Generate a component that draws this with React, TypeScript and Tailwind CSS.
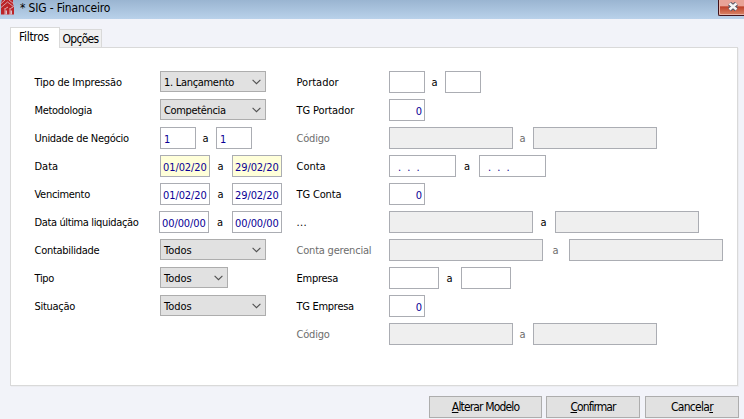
import type { ReactNode } from 'react';

type FieldSpec = { w: string; value?: string; tone?: 'plain' | 'yellow' | 'off'; align?: string };

function Label({ children, muted, track = '' }: { children: ReactNode; muted?: boolean; track?: string }) {
  return <span className={`mt-px h-[21px] leading-[21px] ${track} ${muted ? 'text-[#6d6d6d]' : 'text-black'}`}>{children}</span>;
}

function Field({ w, value, tone = 'plain', align = 'pl-[3px]' }: FieldSpec) {
  const tones = { plain: 'bg-white', yellow: 'bg-[#ffffd9]', off: 'bg-[#efefef]' };
  return (
    <div className={`h-[22px] shrink-0 overflow-hidden whitespace-pre border border-[#abadb3] pt-px leading-[21px] text-[#0a0096] ${w} ${tones[tone]} ${align}`}>
      {value}
    </div>
  );
}

function Combo({ w, value, track = '' }: { w: string; value: string; track?: string }) {
  return (
    <div className={`flex h-[21px] shrink-0 items-center justify-between border border-[#adadad] bg-[#e1e1e1] pr-1 pl-[3px] text-black ${w} ${track}`}>
      <span className="pt-[2px] leading-[19px]">{value}</span>
      <svg width="9" height="6" viewBox="0 0 9 6" fill="none" stroke="#505050" strokeWidth="1.1">
        <path d="M.6 .8 4.5 4.7 8.4 .8" />
      </svg>
    </div>
  );
}

function Row({ label, labelW, muted, track, children }: { label: string; labelW: string; muted?: boolean; track?: string; children: ReactNode }) {
  return (
    <div className="flex h-7 items-start whitespace-nowrap">
      <div className={`flex shrink-0 pl-[0.5px] ${labelW}`}>
        <Label muted={muted} track={track}>{label}</Label>
      </div>
      {children}
    </div>
  );
}

function To({ w, muted }: { w: string; muted?: boolean }) {
  return (
    <div className={`flex shrink-0 justify-center pr-px ${w}`}>
      <Label muted={muted}>a</Label>
    </div>
  );
}

const dateAlign = 'pl-[2px] tracking-[-0.1px]';

function Logo() {
  return (
    <svg width="16" height="16" viewBox="0 0 16 16" className="block">
      <path d="M2 0h11v4l1 3v7.500H1V3z" fill="#bb2428" />
      <path d="M0 4.500 5 0M1 7.500 7.500 2l6.500 5M9 0l5 4" stroke="#d9aab3" strokeWidth=".9" fill="none" />
      <path d="M5 8v7M5.500 8.500 8 7M10 8v7M10.500 8.500 13 7" stroke="#e3bfc5" strokeWidth=".9" fill="none" />
      <path d="M5.500 10.500H7v4H5.500zM10.500 10.500H12v4h-1.500z" fill="#dcc0cb" />
    </svg>
  );
}

function Action({ w, track, children }: { w: string; track: string; children: ReactNode }) {
  return (
    <button className={`h-[22px] border border-[#adadad] bg-[#e1e1e1] text-[12px] leading-[20px] text-black ${w} ${track}`}>
      {children}
    </button>
  );
}

export default function App() {
  return (
    <div className="h-[419px] w-[744px] overflow-hidden bg-[#f2f3f9] font-['DejaVu_Sans_Condensed','DejaVu_Sans',sans-serif] text-[11px] [font-stretch:condensed]">
      <header className="flex h-[19px] items-start justify-between bg-linear-to-b from-[#9ab5d1] to-[#b9d1ea]">
        <div className="flex">
          <Logo />
          <h1 className="ml-[4px] text-[12px] leading-[16px] tracking-[-0.15px] whitespace-nowrap text-black">* SIG - Financeiro</h1>
        </div>
        <div className="flex h-4 w-[26px] items-start justify-center rounded-bl-[2px] border-b border-l border-[#42121a] bg-linear-to-b from-[#e8a397] from-40% via-[#bd4029] via-45% to-[#d98568] pl-1 shadow-[inset_1px_-1px_0_#e8b5a9]">
          <svg width="13" height="12" viewBox="0 0 13 12" className="mt-0.5">
            <path d="M2.500 1.500 9.500 7.500M9.500 1.500 2.500 7.500" stroke="#535666" strokeWidth="4.500" />
            <path d="M2.500 1.500 9.500 7.500M9.500 1.500 2.500 7.500" stroke="#f5f5f5" strokeWidth="2.500" />
          </svg>
        </div>
      </header>

      <nav className="ml-[10px] flex h-7 items-end pt-2">
        <div className="relative z-10 -mb-px h-[21px] w-[50px] shrink-0 border border-b-0 border-[#d9d9d9] bg-white pl-2 text-[12px] leading-[18px] tracking-[-0.3px]">Filtros</div>
        <div className="h-[18px] w-[42px] shrink-0 border border-b-0 border-l-0 border-[#d9d9d9] bg-[#f0f0f0] pl-[2.5px] text-[12px] leading-[19px] tracking-[-0.7px]">Opções</div>
      </nav>

      <main className="ml-[10px] flex h-[339px] w-[728px] border border-[#d9d9d9] bg-white pt-[23px] pl-[23px] shadow-[1px_1px_0_#ecedf1]">
        <section className="w-[262px] shrink-0">
          <Row label="Tipo de Impressão" labelW="w-[126px]" track="tracking-[-0.2px]"><Combo w="w-[106px]" value="1. Lançamento" track="tracking-[-0.3px]" /></Row>
          <Row label="Metodologia" labelW="w-[126px]" track="tracking-[-0.3px]"><Combo w="w-[106px]" value="Competência" track="tracking-[-0.35px]" /></Row>
          <Row label="Unidade de Negócio" labelW="w-[126px]" track="tracking-[-0.3px]">
            <Field w="w-[36px]" value="1" /><To w="w-5" /><Field w="w-[36px]" value="1" />
          </Row>
          <Row label="Data" labelW="w-[126px]">
            <Field w="w-[50px]" value="01/02/20" tone="yellow" align={dateAlign} /><To w="w-[22px]" /><Field w="w-[50px]" value="29/02/20" tone="yellow" align={dateAlign} />
          </Row>
          <Row label="Vencimento" labelW="w-[126px]" track="tracking-[-0.3px]">
            <Field w="w-[50px]" value="01/02/20" align={dateAlign} /><To w="w-[22px]" /><Field w="w-[50px]" value="29/02/20" align={dateAlign} />
          </Row>
          <Row label="Data última liquidação" labelW="w-[125px]" track="tracking-[-0.37px]">
            <Field w="w-[50px]" value="00/00/00" align={dateAlign} /><To w="w-[23px]" /><Field w="w-[50px]" value="00/00/00" align={dateAlign} />
          </Row>
          <Row label="Contabilidade" labelW="w-[126px]" track="tracking-[-0.27px]"><Combo w="w-[106px]" value="Todos" /></Row>
          <Row label="Tipo" labelW="w-[126px]" track="tracking-[-0.3px]"><Combo w="w-[68px]" value="Todos" /></Row>
          <Row label="Situação" labelW="w-[126px]" track="tracking-[-0.3px]"><Combo w="w-[106px]" value="Todos" /></Row>
        </section>

        <section>
          <Row label="Portador" labelW="w-[93px]"><Field w="w-[36px]" /><To w="w-5" /><Field w="w-[36px]" /></Row>
          <Row label="TG Portador" labelW="w-[93px]" track="tracking-[-0.12px]"><Field w="w-[36px]" value="0" align="pr-[2px] text-right" /></Row>
          <Row label="Código" labelW="w-[93px]" muted track="tracking-[-0.2px]"><Field w="w-[124px]" tone="off" /><To w="w-5" muted /><Field w="w-[124px]" tone="off" /></Row>
          <Row label="Conta" labelW="w-[93px]">
            <Field w="w-[67px]" value=". . ." align="pl-2 [word-spacing:3px]" /><To w="w-[23px]" /><Field w="w-[67px]" value=". . ." align="pl-2 [word-spacing:3px]" />
          </Row>
          <Row label="TG Conta" labelW="w-[93px]" track="tracking-[-0.15px]"><Field w="w-[36px]" value="0" align="pr-[2px] text-right" /></Row>
          <Row label="..." labelW="w-[93px]" track="tracking-[0.4px]"><Field w="w-[144px]" tone="off" /><To w="w-[22px]" /><Field w="w-[144px]" tone="off" /></Row>
          <Row label="Conta gerencial" labelW="w-[93px]" muted track="tracking-[-0.2px]"><Field w="w-[154px]" tone="off" /><To w="w-[26px]" muted /><Field w="w-[154px]" tone="off" /></Row>
          <Row label="Empresa" labelW="w-[93px]" track="tracking-[-0.25px]"><Field w="w-[50px]" /><To w="w-[22px]" /><Field w="w-[50px]" /></Row>
          <Row label="TG Empresa" labelW="w-[93px]" track="tracking-[-0.28px]"><Field w="w-[36px]" value="0" align="pr-[2px] text-right" /></Row>
          <Row label="Código" labelW="w-[93px]" muted track="tracking-[-0.2px]"><Field w="w-[124px]" tone="off" /><To w="w-5" muted /><Field w="w-[124px]" tone="off" /></Row>
        </section>
      </main>

      <footer className="flex pt-[10px] pl-[429px]">
        <Action w="w-[113px]" track="tracking-[-0.85px]"><u>A</u>lterar Modelo</Action>
        <span className="w-1 shrink-0" />
        <Action w="w-[94px]" track="tracking-[-0.95px]"><u>C</u>onfirmar</Action>
        <span className="w-[5px] shrink-0" />
        <Action w="w-[94px]" track="tracking-[-0.7px]">Cancela<u>r</u></Action>
      </footer>
    </div>
  );
}
